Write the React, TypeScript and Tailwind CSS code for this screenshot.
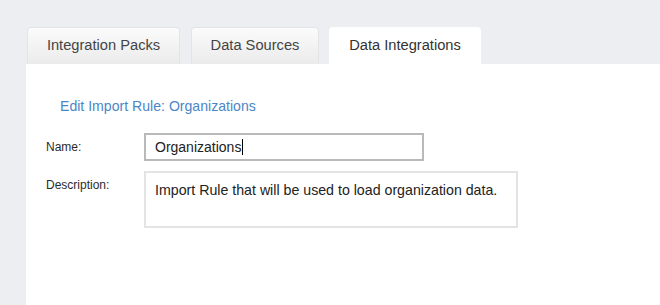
import React from "react";

const font = { fontFamily: '"Liberation Sans", Arial, sans-serif' };

function Tab({ label, active, width }: { label: string; active?: boolean; width: string }) {
  return (
    <div
      className={
        "flex h-[37px] items-center justify-center rounded-t-[4px] text-[14.667px] leading-[17px] " +
        width +
        (active
          ? " bg-white text-[#333333]"
          : " border border-b-0 border-[#e2e4e7] bg-gradient-to-b from-[#fbfbfb] to-[#ebebeb] text-[#444444]")
      }
    >
      <span className="-mt-[1px]">{label}</span>
    </div>
  );
}

export default function App() {
  return (
    <div className="flex h-[305px] w-[660px] flex-col overflow-hidden bg-[#eceef2]" style={font}>
      <div className="flex pl-[27px] pt-[27px]">
        <Tab label="Integration Packs" width="w-[153px]" />
        <div className="w-[11px]" />
        <Tab label="Data Sources" width="w-[128px]" />
        <div className="w-[10px]" />
        <Tab label="Data Integrations" width="w-[152px]" active />
      </div>
      <div className="ml-[26px] flex-1 bg-white pl-[20px] pt-[34px]">
        <div className="ml-[14px] text-[14.1px] leading-[16px] text-[#4a86c8]">Edit Import Rule: Organizations</div>
        <div className="mt-[19px] flex items-center">
          <div className="w-[98px] text-[12px] leading-[14px] text-[#2b2b2b]">Name:</div>
          <div className="flex h-[28px] w-[280px] items-center border-2 border-[#b9b9b9] pl-[9px] text-[14px] leading-[16px] text-[#222222]">
            <span>Organizations</span>
            <span className="ml-[1px] h-[16px] w-[1px] bg-black" />
          </div>
        </div>
        <div className="mt-[10px] flex items-start">
          <div className="mt-[7px] w-[98px] text-[12px] leading-[14px] text-[#2b2b2b]">Description:</div>
          <div className="h-[57px] w-[374px] border-2 border-[#e4e4e4] pl-[9px] pt-[9px] text-[14.2px] leading-[16px] text-[#222222]">
            Import Rule that will be used to load organization data.
          </div>
        </div>
      </div>
    </div>
  );
}
